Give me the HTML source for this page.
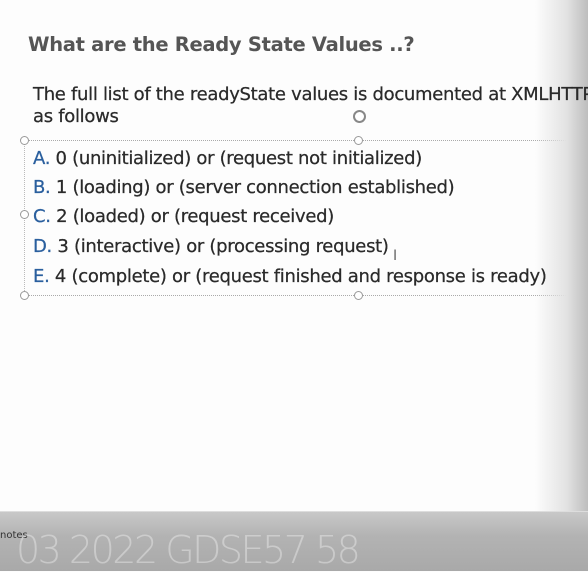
<!DOCTYPE html>
<html><head><style>
html,body{margin:0;padding:0;width:588px;height:570px;overflow:hidden;background:#fdfdfd;font-family:"DejaVu Sans","Liberation Sans",sans-serif;}
.t{position:absolute;white-space:nowrap;color:#3a3a3a;z-index:2}
#title{left:28px;top:33px;font-size:19.5px;font-weight:bold;color:#555;letter-spacing:-0.3px}
.p{font-size:18px;letter-spacing:-0.3px;color:#2a2a2a;-webkit-text-stroke:0.25px #2a2a2a}
.L{color:#2a5f9e;-webkit-text-stroke:0.25px #2a5f9e}
.dash{position:absolute;border-top:1px dotted #aaa;}
.vd{position:absolute;border-left:1px dotted #bbb;}
.h{position:absolute;width:7px;height:7px;border:1px solid #999;border-radius:50%;background:#fff}
#fade{position:absolute;left:535px;top:0;width:53px;height:515px;z-index:1;background:linear-gradient(to right,rgba(240,240,240,0),#e2e2e2 60%,#bdbdbd)}
#bar{position:absolute;left:0;top:511px;width:588px;height:59px;z-index:3;background:linear-gradient(#c8c8c8,#b3b3b3 40%,#a9a9a9);border-top:1px solid #ddd}
</style></head><body>
<div id="title" class="t">What are the Ready State Values ..?</div>
<div class="t p" style="left:33px;top:84px">The full list of the readyState values is documented at XMLHTTP</div>
<div class="t p" style="left:33px;top:106px">as follows</div>
<div class="dash" style="left:24px;top:140px;width:564px"></div>
<div class="dash" style="left:24px;top:295px;width:564px"></div>
<div class="vd" style="left:24px;top:140px;height:155px"></div>
<div class="h" style="left:20px;top:136px"></div>
<div class="h" style="left:354px;top:136px"></div>
<div class="h" style="left:20px;top:210px"></div>
<div class="h" style="left:20px;top:291px"></div>
<div class="h" style="left:354px;top:291px"></div>
<div class="h" style="left:353px;top:110px;width:9px;height:9px;border:2px solid #888"></div>
<div class="t p" style="left:33px;top:148px"><span class="L">A.</span> 0 (uninitialized) or (request not initialized)</div>
<div class="t p" style="left:33px;top:177px"><span class="L">B.</span> 1 (loading) or (server connection established)</div>
<div class="t p" style="left:33px;top:206px"><span class="L">C.</span> 2 (loaded) or (request received)</div>
<div class="t p" style="left:33px;top:236px"><span class="L">D.</span> 3 (interactive) or (processing request)</div>
<div class="t p" style="left:33px;top:266px"><span class="L">E.</span> 4 (complete) or (request finished and response is ready)</div>
<div class="t" style="left:393px;top:248px;font-size:14px;color:#666">I</div>
<div id="fade"></div>
<div id="bar">
<div class="t" style="left:0;top:18px;font-size:10px;color:#333">notes</div>
<div class="t" style="left:16px;top:16px;font-size:38px;color:rgba(255,255,255,0.35);font-weight:300;letter-spacing:-2.5px">03 2022 GDSE57 58</div>
</div>
</body></html>
